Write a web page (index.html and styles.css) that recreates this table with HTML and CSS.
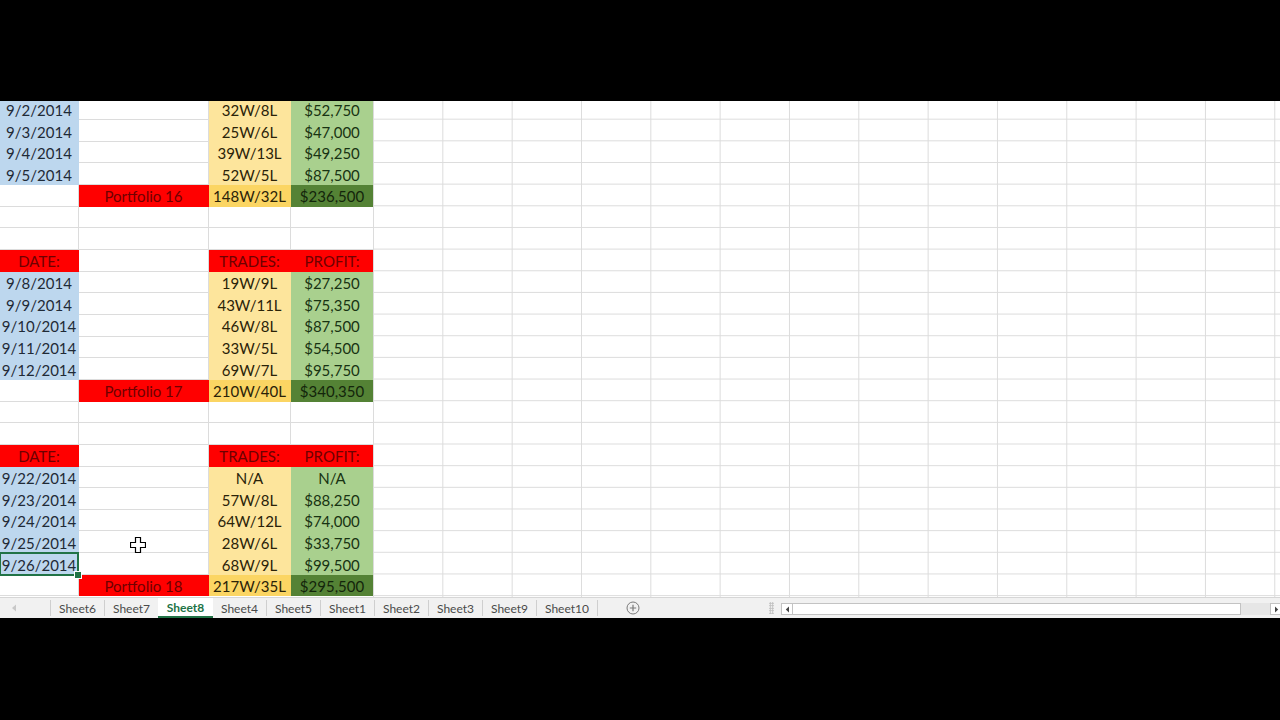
FILE: index.html
```html
<!DOCTYPE html>
<html>
<head>
<meta charset="utf-8">
<link rel="stylesheet" href="styles.css">
</head>
<body>
<div class="band"></div>
<div class="sheet">
  <div class="data">
    <div class="c d">9/2/2014</div><div class="c"></div><div class="c t">32W/8L</div><div class="c p">$52,750</div>
    <div class="c d">9/3/2014</div><div class="c"></div><div class="c t">25W/6L</div><div class="c p">$47,000</div>
    <div class="c d">9/4/2014</div><div class="c"></div><div class="c t">39W/13L</div><div class="c p">$49,250</div>
    <div class="c d">9/5/2014</div><div class="c"></div><div class="c t">52W/5L</div><div class="c p">$87,500</div>
    <div class="c"></div><div class="c h">Portfolio 16</div><div class="c tt">148W/32L</div><div class="c tp">$236,500</div>
    <div class="c"></div><div class="c"></div><div class="c"></div><div class="c"></div>
    <div class="c"></div><div class="c"></div><div class="c"></div><div class="c"></div>
    <div class="c h">DATE:</div><div class="c"></div><div class="c h">TRADES:</div><div class="c h">PROFIT:</div>
    <div class="c d">9/8/2014</div><div class="c"></div><div class="c t">19W/9L</div><div class="c p">$27,250</div>
    <div class="c d">9/9/2014</div><div class="c"></div><div class="c t">43W/11L</div><div class="c p">$75,350</div>
    <div class="c d">9/10/2014</div><div class="c"></div><div class="c t">46W/8L</div><div class="c p">$87,500</div>
    <div class="c d">9/11/2014</div><div class="c"></div><div class="c t">33W/5L</div><div class="c p">$54,500</div>
    <div class="c d">9/12/2014</div><div class="c"></div><div class="c t">69W/7L</div><div class="c p">$95,750</div>
    <div class="c"></div><div class="c h">Portfolio 17</div><div class="c tt">210W/40L</div><div class="c tp">$340,350</div>
    <div class="c"></div><div class="c"></div><div class="c"></div><div class="c"></div>
    <div class="c"></div><div class="c"></div><div class="c"></div><div class="c"></div>
    <div class="c h">DATE:</div><div class="c"></div><div class="c h">TRADES:</div><div class="c h">PROFIT:</div>
    <div class="c d">9/22/2014</div><div class="c"></div><div class="c t">N/A</div><div class="c p">N/A</div>
    <div class="c d">9/23/2014</div><div class="c"></div><div class="c t">57W/8L</div><div class="c p">$88,250</div>
    <div class="c d">9/24/2014</div><div class="c"></div><div class="c t">64W/12L</div><div class="c p">$74,000</div>
    <div class="c d">9/25/2014</div><div class="c"></div><div class="c t">28W/6L</div><div class="c p">$33,750</div>
    <div class="c d sel">9/26/2014</div><div class="c"></div><div class="c t">68W/9L</div><div class="c p">$99,500</div>
    <div class="c"></div><div class="c h">Portfolio 18</div><div class="c tt">217W/35L</div><div class="c tp">$295,500</div>
  </div>
  <div class="rest"></div>
  <svg class="cursor" width="16" height="16" viewBox="0 0 16 16"><path d="M5.5 0.5h5v5h5v5h-5v5h-5v-5h-5v-5h5z" fill="#fff" stroke="#000" stroke-width="1.2"/></svg>
</div>
<div class="tabbar">
  <div class="tabnav"><svg width="6" height="8" viewBox="0 0 6 8"><path d="M5 0.5L1 4l4 3.5z" fill="#c8c8c8"/></svg></div>
  <div class="tab">Sheet6</div>
  <div class="tab">Sheet7</div>
  <div class="tab active">Sheet8</div>
  <div class="tab">Sheet4</div>
  <div class="tab">Sheet5</div>
  <div class="tab">Sheet1</div>
  <div class="tab">Sheet2</div>
  <div class="tab">Sheet3</div>
  <div class="tab">Sheet9</div>
  <div class="tab wide">Sheet10</div>
  <div class="addsheet"><svg width="14" height="14" viewBox="0 0 14 14"><circle cx="7" cy="7" r="6" fill="none" stroke="#7a7a7a" stroke-width="1"/><path d="M7 3.8v6.4M3.8 7h6.4" stroke="#7a7a7a" stroke-width="1.2"/></svg></div>
  <div class="grip"></div>
  <div class="hscroll">
    <div class="sbtn"><svg width="5" height="7" viewBox="0 0 5 7"><path d="M4 0.5L0.8 3.5 4 6.5z" fill="#444"/></svg></div>
    <div class="thumb"></div>
    <div class="track"></div>
    <div class="sbtn"><svg width="5" height="7" viewBox="0 0 5 7"><path d="M1 0.5l3.2 3L1 6.5z" fill="#444"/></svg></div>
  </div>
</div>
</body>
</html>
```
FILE: styles.css
```css
* { box-sizing: border-box; }
html, body { margin: 0; padding: 0; }
body {
  width: 1280px;
  height: 720px;
  overflow: hidden;
  background: #000;
  font-family: Lato, "Open Sans", "Liberation Sans", sans-serif;
}
.band { height: 101px; }
.sheet {
  height: 496px;
  background: #fff;
  display: flex;
  position: relative;
  overflow: hidden;
}
.data {
  flex: none;
  display: grid;
  grid-template-columns: 79px 130px 82px 82px;
  grid-auto-rows: 21.67px;
  margin-top: -2.67px;
}
.c {
  border-right: 1px solid #dcdcdc;
  border-bottom: 1px solid #dcdcdc;
  font-size: 15px;
  line-height: 21px;
  padding-top: 1.5px;
  text-align: center;
  color: #1e1e1e;
  white-space: nowrap;
  overflow: visible;
}
.c:nth-child(4n) { border-right: none; }
.d { background: #bdd7ee; border-color: #bdd7ee; color: #1f2a36; }
.t { background: #fde59c; border-color: #fde59c; color: #2a2208; }
.p { background: #a9d08e; border-color: #a9d08e; color: #183312; }
.h { background: #ff0000; border-color: #ff0000; color: #6e0000; }
.tt { background: #fbd563; border-color: #fbd563; color: #2a2208; }
.tp { background: #548235; border-color: #548235; color: #13250b; }
.sel { position: relative; z-index: 2; }
.sel::before {
  content: "";
  position: absolute;
  left: -1px; top: -1px; right: -1px; bottom: -2px;
  border: 2px solid #217346;
}
.sel::after {
  content: "";
  position: absolute;
  right: -4px; bottom: -5px;
  width: 6px; height: 6px;
  background: #217346;
  border: 1px solid #fff;
}
.rest {
  flex: 1;
  margin-top: -2.67px;
  background-image:
    linear-gradient(to right, #dcdcdc 1px, transparent 1px),
    linear-gradient(to top, #dcdcdc 1px, transparent 1px);
  background-size: 69.33px 100%, 100% 21.67px;
}
.cursor {
  position: absolute;
  left: 130px;
  top: 436px;
  z-index: 3;
}
.tabbar {
  height: 21px;
  background: #f1f1f1;
  border-top: 1px solid #d6d6d6;
  display: flex;
  align-items: stretch;
  font-size: 12px;
  color: #4a4a4a;
  overflow: hidden;
}
.tabbar > * { flex: none; }
.tabnav {
  width: 51px;
  border-right: 1px solid #cfcfcf;
  margin: 2px 0 2px;
  display: flex;
  align-items: center;
  padding-left: 11px;
}
.tab {
  width: 54px;
  border-right: 1px solid #cfcfcf;
  margin: 2px 0 2px;
  display: flex;
  align-items: center;
  justify-content: center;
}
.tab.wide { width: 61px; }
.tab.active {
  margin: 0 0 0 -1px;
  width: 55px;
  background: #fff;
  color: #217346;
  font-weight: 700;
  border-right: none;
  border-bottom: 2px solid #217346;
  padding-top: 1px;
}
.addsheet {
  margin-left: 28px;
  display: flex;
  align-items: center;
}
.grip {
  margin-left: 129px;
  width: 5px;
  margin-top: 4px;
  height: 12px;
  background-image: radial-gradient(circle, #bdbdbd 0.9px, transparent 1.1px);
  background-size: 2.5px 2.5px;
}
.hscroll {
  margin-left: 7px;
  margin-top: 5px;
  height: 12px;
  display: flex;
}
.hscroll > * { flex: none; }
.sbtn {
  width: 12px;
  height: 12px;
  background: #fff;
  border: 1px solid #c3c3c3;
  display: flex;
  align-items: center;
  justify-content: center;
}
.thumb {
  width: 448px;
  height: 12px;
  background: #fff;
  border: 1px solid #c3c3c3;
  border-left: none;
}
.track {
  width: 29px;
  height: 12px;
  background: #e6e6e6;
}
```
